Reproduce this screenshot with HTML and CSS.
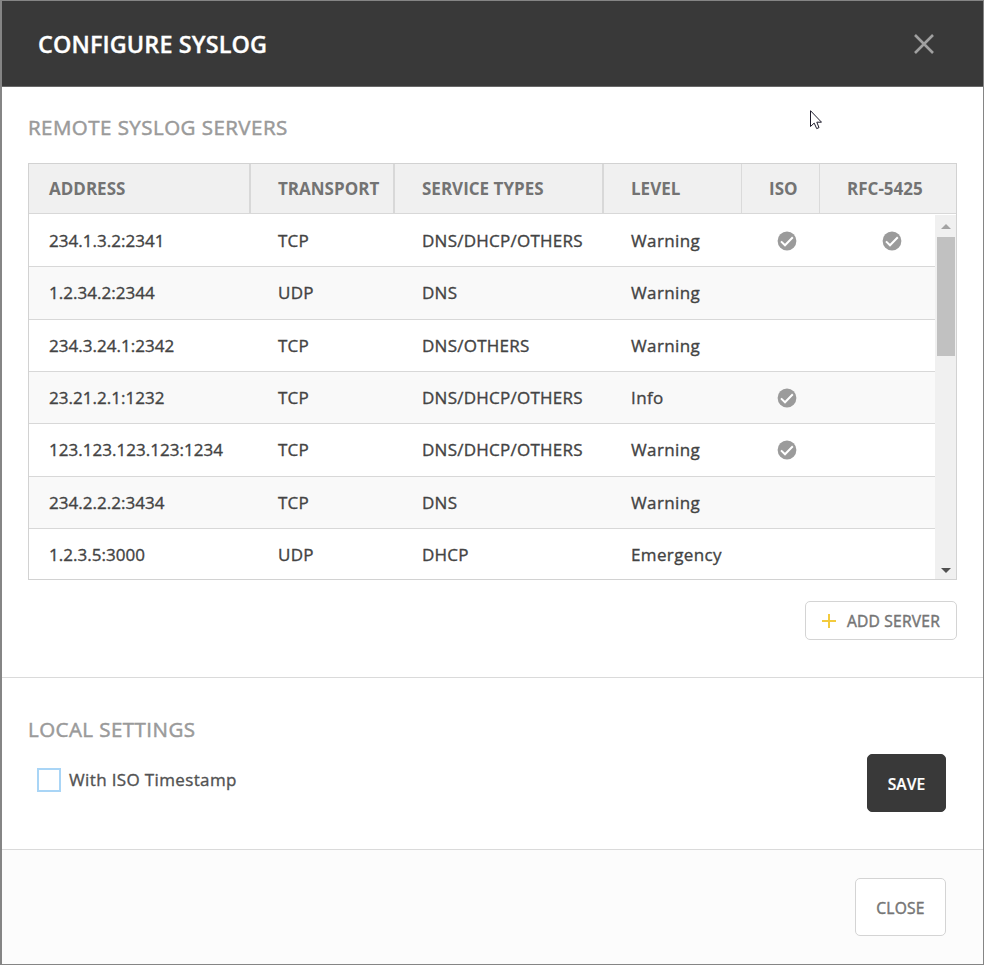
FILE: index.html
```html
<!DOCTYPE html>
<html lang="en">
<head>
<meta charset="utf-8">
<title>Configure Syslog</title>
<link rel="stylesheet" href="styles.css">
</head>
<body>
<svg class="defs" width="0" height="0" aria-hidden="true">
  <symbol id="check" viewBox="0 0 20 20">
    <circle cx="10" cy="10" r="9.4" fill="#9b9b9b"/>
    <path d="M4 10.4 8 14.3 15.8 6.3" fill="none" stroke="#fff" stroke-width="2"/>
  </symbol>
</svg>
<div class="dialog">
  <header class="dialog-header">
    <h1>CONFIGURE SYSLOG</h1>
    <svg class="close-icon" viewBox="0 0 20 20"><path d="M1 1 19 19M19 1 1 19"/></svg>
  </header>
  <section class="servers">
    <h2>REMOTE SYSLOG SERVERS</h2>
    <div class="table">
      <div class="row head">
        <div>ADDRESS</div><div>TRANSPORT</div><div>SERVICE TYPES</div><div>LEVEL</div><div>ISO</div><div>RFC-5425</div>
      </div>
      <div class="table-body">
        <div class="rows">
          <div class="row"><div>234.1.3.2:2341</div><div>TCP</div><div>DNS/DHCP/OTHERS</div><div>Warning</div><div class="mark"><svg><use href="#check"/></svg></div><div class="mark last"><svg><use href="#check"/></svg></div></div>
          <div class="row"><div>1.2.34.2:2344</div><div>UDP</div><div>DNS</div><div>Warning</div><div></div><div></div></div>
          <div class="row"><div>234.3.24.1:2342</div><div>TCP</div><div>DNS/OTHERS</div><div>Warning</div><div></div><div></div></div>
          <div class="row"><div>23.21.2.1:1232</div><div>TCP</div><div>DNS/DHCP/OTHERS</div><div>Info</div><div class="mark"><svg><use href="#check"/></svg></div><div></div></div>
          <div class="row"><div>123.123.123.123:1234</div><div>TCP</div><div>DNS/DHCP/OTHERS</div><div>Warning</div><div class="mark"><svg><use href="#check"/></svg></div><div></div></div>
          <div class="row"><div>234.2.2.2:3434</div><div>TCP</div><div>DNS</div><div>Warning</div><div></div><div></div></div>
          <div class="row"><div>1.2.3.5:3000</div><div>UDP</div><div>DHCP</div><div>Emergency</div><div></div><div></div></div>
        </div>
        <div class="scrollbar">
          <svg class="arrow" viewBox="0 0 10 5"><path d="M0 5 5 0 10 5Z" fill="#a3a3a3"/></svg>
          <div class="thumb"></div>
          <svg class="arrow down" viewBox="0 0 10 5"><path d="M0 0H10L5 5Z" fill="#505050"/></svg>
        </div>
      </div>
    </div>
    <button class="btn add"><svg class="plus" viewBox="0 0 14 14"><path d="M7 0V14M0 7H14"/></svg><span>ADD SERVER</span></button>
  </section>
  <section class="local">
    <h2>LOCAL SETTINGS</h2>
    <div class="local-row">
      <label class="option"><span class="checkbox"></span><span>With ISO Timestamp</span></label>
      <button class="btn save">SAVE</button>
    </div>
  </section>
  <footer class="dialog-footer"><button class="btn close">CLOSE</button></footer>
</div>
<svg class="cursor" viewBox="0 0 12 20"><path d="M.5.7V16.5L4.2 13.1 6.7 18.6 9 17.6 6.8 12.2H11.5Z"/></svg>
</body>
</html>
```
FILE: styles.css
```css
* { box-sizing: border-box; }
body {
  margin: 0;
  background: #fff;
  font-family: "Open Sans", "Noto Sans", sans-serif;
  font-size: 17px;
  color: #434343;
  -webkit-text-stroke-width: .35px;
}
.defs { position: absolute; }
.dialog {
  height: 965px;
  display: flex;
  flex-direction: column;
  border: 1px solid #858585;
  border-left-width: 2px;
}
.dialog-header {
  height: 86px;
  flex: none;
  display: flex;
  align-items: center;
  justify-content: space-between;
  padding: 1px 49px 0 36px;
  background: #393939;
  border-bottom: 1px solid #686868;
}
h1, h2 { margin: 0; white-space: nowrap; }
h1 { color: #fff; font-size: 23.4px; font-weight: 600; line-height: 30px; letter-spacing: .12px; }
h2 { color: #9a9a9a; font-size: 20.5px; font-weight: 400; line-height: 28px; letter-spacing: .46px; -webkit-text-stroke-width: .5px; }
.close-icon { width: 20px; height: 20px; fill: none; stroke: #a0a0a0; stroke-width: 2.6; }
.servers {
  height: 591px;
  flex: none;
  display: flex;
  flex-direction: column;
  padding: 26px 26px 0;
  border-bottom: 1px solid #dadada;
}
.table {
  height: 417px;
  margin-top: 22px;
  display: flex;
  flex-direction: column;
  border: 1px solid #d2d2d2;
}
.row {
  display: grid;
  grid-template-columns: 222px 144px 209px 138px 78px 1fr;
  flex: none;
  height: 52.33px;
  align-items: center;
  border-bottom: 1px solid #d8d8d8;
}
.row > div { padding-left: 27px; white-space: nowrap; letter-spacing: .25px; }
.row > div:nth-child(4) { letter-spacing: .38px; }
.row > div:first-child { padding-left: 20px; letter-spacing: .03px; }
.head {
  height: 50px;
  background: #f0f0f0;
  color: #737373;
  font-weight: 700;
  -webkit-text-stroke-width: 0;
}
.head > div { height: 49px; line-height: 49px; border-right: 2px solid #d8d8d8; }
.row.head > div { letter-spacing: 0; }
.head > div:nth-child(n+4) { border-right: 1px solid #dadada; }
.head > div:last-child { border-right: 0; }
.table-body { flex: 1; display: flex; overflow: hidden; }
.rows { flex: 1; display: flex; flex-direction: column; }
.rows .row:first-child { height: 53.3px; padding-top: 1px; }
.rows .row:nth-child(even) { background: #f9f9f9; }
.row > .mark { padding-left: 35px; }
.row > .last { padding-left: 62px; }
.mark svg { width: 20px; height: 20px; display: block; }
.scrollbar {
  width: 21px;
  margin-top: 1px;
  display: flex;
  flex-direction: column;
  align-items: center;
  padding: 9px 0 6px;
  background: #f0f0f0;
}
.arrow { width: 10px; height: 5px; flex: none; }
.thumb { width: 18px; height: 119px; margin-top: 8px; background: #c1c1c1; }
.down { margin-top: auto; }
.btn {
  display: flex;
  align-items: center;
  justify-content: center;
  padding: 0;
  border: 1px solid #d4d4d4;
  border-radius: 5px;
  background: #fff;
  color: #757575;
  font: 400 15.6px "Open Sans", sans-serif;
  letter-spacing: .22px;
  -webkit-text-stroke-width: .45px;
}
.add { width: 152px; height: 39px; margin-top: 21px; align-self: flex-end; gap: 11px; }
.plus { width: 14px; height: 14px; stroke: #f3cb3e; stroke-width: 2; fill: none; }
.local { height: 172px; flex: none; padding: 37px 37px 0 26px; border-bottom: 1px solid #dadada; }
.local-row { display: flex; justify-content: space-between; align-items: flex-start; margin-top: 11px; }
.option { display: flex; align-items: center; gap: 8px; margin: 14px 0 0 9px; color: #525252; line-height: 24px; letter-spacing: .36px; }
.checkbox { width: 24px; height: 24px; border: 2px solid #a9d5f6; background: #fff; }
.save { width: 79px; height: 58px; padding-top: 1px; background: #393939; border-color: #393939; color: #fff; font-weight: 600; letter-spacing: .1px; -webkit-text-stroke-width: .2px; }
.dialog-footer { flex: 1; display: flex; justify-content: flex-end; padding: 28px 37px 0; background: #fcfcfc; }
.close { width: 91px; height: 58px; padding-top: 1px; }
.cursor { position: absolute; left: 810px; top: 110px; width: 12px; height: 20px; fill: #fff; stroke: #1d1b2b; stroke-width: 1; }
```
